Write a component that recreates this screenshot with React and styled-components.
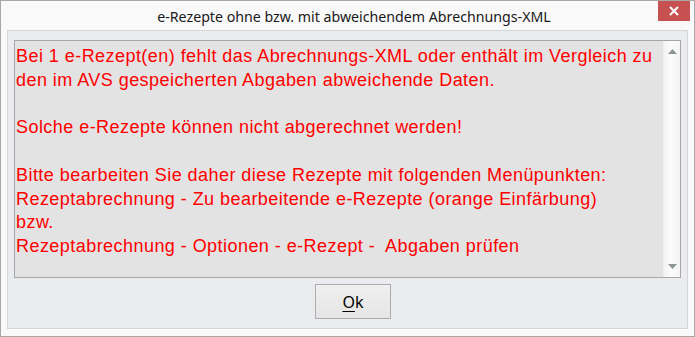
import React from "react";
import styled, { createGlobalStyle } from "styled-components";

const GlobalStyle = createGlobalStyle`
  html, body {
    margin: 0;
    padding: 0;
    background: #ffffff;
  }
  * {
    box-sizing: border-box;
  }
`;

const lines = [
  "Bei 1 e-Rezept(en) fehlt das Abrechnungs-XML oder enthält im Vergleich zu",
  "den im AVS gespeicherten Abgaben abweichende Daten.",
  "",
  "Solche e-Rezepte können nicht abgerechnet werden!",
  "",
  "Bitte bearbeiten Sie daher diese Rezepte mit folgenden Menüpunkten:",
  "Rezeptabrechnung - Zu bearbeitende e-Rezepte (orange Einfärbung)",
  "bzw.",
  "Rezeptabrechnung - Optionen - e-Rezept -  Abgaben prüfen",
];

export default function App() {
  return (
    <>
      <GlobalStyle />
      <Window>
        <TitleBar>
          <Title>e-Rezepte ohne bzw. mit abweichendem Abrechnungs-XML</Title>
          <CloseButton>
            <svg width="10" height="10" viewBox="0 0 10 10">
              <path d="M1 1 L9 9 M9 1 L1 9" stroke="#ffffff" strokeWidth="2" />
            </svg>
          </CloseButton>
        </TitleBar>
        <Client>
          <Memo>
            <MemoText>
              {lines.map((l, i) => (
                <Line key={i}>{l === "" ? "\u00a0" : l}</Line>
              ))}
            </MemoText>
            <ScrollBar>
              <Arrow viewBox="0 0 9 5">
                <path d="M0 5 L4.5 0 L9 5 Z" fill="#8b9597" />
              </Arrow>
              <Arrow viewBox="0 0 9 5">
                <path d="M0 0 L9 0 L4.5 5 Z" fill="#8b9597" />
              </Arrow>
            </ScrollBar>
          </Memo>
          <ButtonRow>
            <OkButton>
              <u>O</u>k
            </OkButton>
          </ButtonRow>
        </Client>
      </Window>
    </>
  );
}

const Window = styled.div`
  width: 695px;
  height: 337px;
  border: 1px solid #a8a8a8;
  background: #f9f9f9;
  padding: 0 6px 7px 6px;
  display: flex;
  flex-direction: column;
`;

const TitleBar = styled.div`
  position: relative;
  height: 29px;
  display: flex;
  align-items: center;
  justify-content: center;
`;

const Title = styled.div`
  font-family: "Noto Sans", "Open Sans", sans-serif;
  font-size: 14.2px;
  color: #1a1a1a;
  padding-left: 13px;
  margin-top: 1px;
`;

const CloseButton = styled.div`
  position: absolute;
  top: 0;
  right: -2px;
  width: 32px;
  height: 20px;
  background: #c75050;
  display: flex;
  align-items: center;
  justify-content: center;
`;

const Client = styled.div`
  flex: 1;
  border: 1px solid #d6d6d6;
  background: #ebecf0;
  padding: 9px 6px 9px 6px;
  display: flex;
  flex-direction: column;
`;

const Memo = styled.div`
  height: 238px;
  border: 1px solid #a6a6a6;
  background: #e3e3e3;
  display: flex;
`;

const MemoText = styled.div`
  flex: 1;
  padding: 4px 0 0 1px;
  font-family: "Liberation Sans", Arial, sans-serif;
  font-size: 18px;
  letter-spacing: 0.45px;
  line-height: 23.75px;
  color: #ff0000;
`;

const Line = styled.div`
  white-space: pre;
`;

const ScrollBar = styled.div`
  width: 17px;
  background: linear-gradient(to right, #f3f3f3, #fbfbfb 40%, #f4f4f4);
  border-left: 1px solid #efefef;
  display: flex;
  flex-direction: column;
  justify-content: space-between;
  align-items: center;
  padding: 8px 0 8px 0;
`;

const Arrow = styled.svg`
  width: 9px;
  height: 5px;
`;

const ButtonRow = styled.div`
  margin-top: 6px;
  display: flex;
  justify-content: center;
  padding-left: 11px;
`;

const OkButton = styled.button`
  width: 76px;
  height: 35px;
  border: 1px solid #acacac;
  background: linear-gradient(to bottom, #f0f0f0, #e5e5e5);
  font-family: "Noto Sans", "Open Sans", sans-serif;
  font-size: 16px;
  color: #000000;
  padding: 0;
  display: flex;
  align-items: center;
  justify-content: center;

  u {
    text-decoration-thickness: 1px;
    text-underline-offset: 3px;
  }
`;
